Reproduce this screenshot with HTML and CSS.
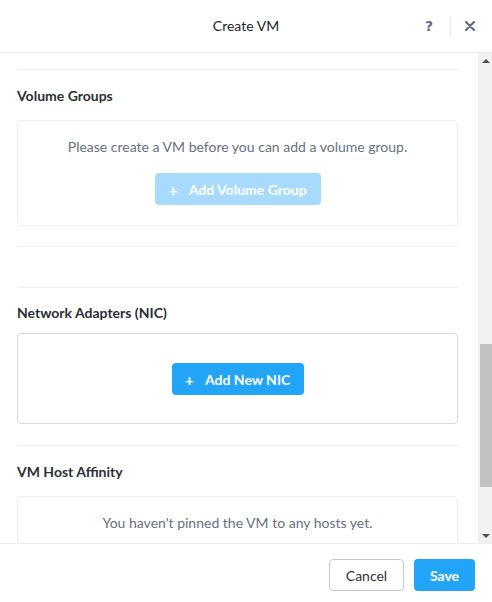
FILE: index.html
```html
<!DOCTYPE html>
<html>
<head>
<meta charset="utf-8">
<title>Create VM</title>
<link rel="stylesheet" href="styles.css">
</head>
<body>
<div class="modal">
  <header class="header">
    <div class="title">Create VM</div>
    <div class="actions">
      <span class="help">?</span>
      <span class="divider"></span>
      <svg class="close" width="10" height="10" viewBox="0 0 10 10"><path d="M1 1L9 9M9 1L1 9" stroke="#5e6d80" stroke-width="2.2" stroke-linecap="round"/></svg>
    </div>
  </header>
  <div class="body">
    <div class="content">
      <div class="rule"></div>
      <h3 class="heading vg-heading">Volume Groups</h3>
      <div class="card card-light">
        <p class="empty">Please create a VM before you can add a volume group.</p>
        <button class="btn btn-primary disabled"><span class="plus">+</span>Add Volume Group</button>
      </div>
      <div class="rule rule-after-card"></div>
      <div class="spacer"></div>
      <div class="rule"></div>
      <h3 class="heading nic-heading">Network Adapters (NIC)</h3>
      <div class="card card-dark nic-card">
        <button class="btn btn-primary"><span class="plus">+</span>Add New NIC</button>
      </div>
      <div class="rule rule-after-card2"></div>
      <h3 class="heading aff-heading">VM Host Affinity</h3>
      <div class="card card-light aff-card">
        <p class="empty">You haven't pinned the VM to any hosts yet.</p>
      </div>
    </div>
    <div class="scrollbar">
      <div class="sb-btn"><span class="arrow-up"></span></div>
      <div class="sb-track"><div class="sb-thumb"></div></div>
      <div class="sb-btn"><span class="arrow-down"></span></div>
    </div>
  </div>
  <footer class="footer">
    <button class="btn btn-default">Cancel</button>
    <button class="btn btn-primary save">Save</button>
  </footer>
</div>
</body>
</html>
```
FILE: styles.css
```css
* { box-sizing: border-box; }
html, body { margin: 0; padding: 0; background: #fff; }
body {
  font-family: "Lato", "Open Sans", sans-serif;
  font-size: 14px;
  color: #22262b;
  width: 492px;
  height: 602px;
  overflow: hidden;
}
.modal {
  display: flex;
  flex-direction: column;
  height: 602px;
}
.header {
  height: 53px;
  flex: none;
  border-bottom: 1px solid #ececec;
  display: flex;
  align-items: center;
  justify-content: center;
  position: relative;
}
.title {
  font-size: 14px;
  line-height: 16px;
  color: #22262b;
  margin-top: -1px;
}
.actions {
  position: absolute;
  right: 17px;
  top: 0;
  height: 52px;
  display: flex;
  align-items: center;
}
.help {
  font-family: "DejaVu Sans", sans-serif;
  font-weight: 700;
  font-size: 14px;
  color: #5e6d80;
  width: 10px;
  text-align: center;
  margin-right: 4px;
  margin-top: -1px;
}
.divider {
  width: 1px;
  height: 21px;
  background: #eaeaea;
  margin: 0 14px 0 12px;
}
.close { display: block; }
.body {
  height: 490px;
  flex: none;
  display: flex;
  overflow: hidden;
}
.content {
  flex: 1;
  padding: 16px 20px 0 17px;
  overflow: hidden;
}
.rule {
  height: 1px;
  background: #eceef1;
}
.heading {
  margin: 0;
  font-size: 14px;
  line-height: 16px;
  font-weight: 700;
  color: #2b2f35;
}
.vg-heading { margin-top: 18px; margin-bottom: 16px; }
.card {
  border: 1px solid #eceef0;
  border-radius: 4px;
  display: flex;
  flex-direction: column;
  align-items: center;
}
.card-light { padding: 18px 0 20px; }
.card-dark { border-color: #d5d9de; }
.empty {
  margin: 0;
  line-height: 16px;
  color: #66717f;
  font-size: 14px;
}
.card-light .btn { margin-top: 18px; }
.rule-after-card { margin-top: 20px; }
.spacer { height: 40px; }
.nic-heading { margin-top: 17px; margin-bottom: 12px; }
.nic-card { padding: 29px 0 28px; }
.rule-after-card2 { margin-top: 21px; }
.aff-heading { margin-top: 18px; margin-bottom: 16px; }
.aff-card { padding-top: 18px; height: 60px; }
.btn {
  font-family: inherit;
  font-size: 14px;
  font-weight: 700;
  height: 32px;
  border-radius: 4px;
  border: none;
  padding: 0;
  cursor: pointer;
  display: inline-flex;
  align-items: center;
  justify-content: center;
}
.btn-primary {
  background: #22a5f7;
  color: #fff;
}
.btn-primary.disabled { background: #a8dbfb; }
.plus {
  font-size: 16px;
  margin-right: 11px;
  font-weight: 700;
}
.card-light .btn { width: 166px; }
.nic-card .btn { width: 132px; }
.scrollbar {
  width: 14px;
  flex: none;
  background: #f1f1f1;
  display: flex;
  flex-direction: column;
}
.sb-btn {
  height: 15px;
  flex: none;
  display: flex;
  align-items: center;
  justify-content: center;
  padding-left: 2px;
}
.arrow-up {
  width: 0; height: 0;
  border-left: 4px solid transparent;
  border-right: 4px solid transparent;
  border-bottom: 4px solid #505050;
}
.arrow-down {
  width: 0; height: 0;
  border-left: 4px solid transparent;
  border-right: 4px solid transparent;
  border-top: 4px solid #505050;
}
.sb-track { flex: 1; }
.sb-thumb {
  margin-top: 276px;
  margin-left: 2px;
  height: 143px;
  background: #c1c1c1;
}
.footer {
  flex: 1;
  border-top: 1px solid #ececec;
  display: flex;
  justify-content: flex-end;
  align-items: flex-start;
  padding: 15px 17px 0 0;
  gap: 10px;
}
.btn-default {
  background: #fff;
  border: 1px solid #c6cad0;
  color: #333;
  font-weight: 400;
  width: 75px;
}
.save { width: 61px; }
```
